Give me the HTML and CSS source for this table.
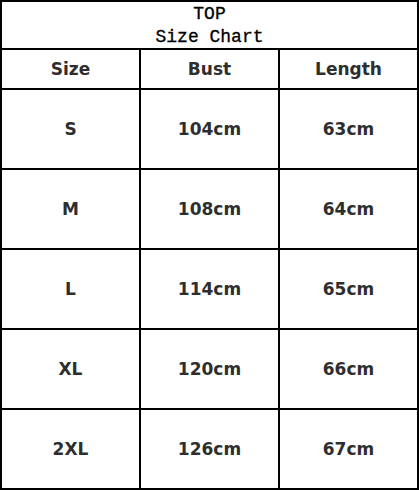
FILE: index.html
```html
<!DOCTYPE html>
<html>
<head>
<meta charset="utf-8">
<link rel="stylesheet" href="styles.css">
</head>
<body>
<div class="chart">
  <div class="cell title">TOP<br>Size Chart</div>
  <div class="cell head">Size</div>
  <div class="cell head">Bust</div>
  <div class="cell head">Length</div>
  <div class="cell">S</div><div class="cell">104cm</div><div class="cell">63cm</div>
  <div class="cell">M</div><div class="cell">108cm</div><div class="cell">64cm</div>
  <div class="cell">L</div><div class="cell">114cm</div><div class="cell">65cm</div>
  <div class="cell">XL</div><div class="cell">120cm</div><div class="cell">66cm</div>
  <div class="cell">2XL</div><div class="cell">126cm</div><div class="cell">67cm</div>
</div>
</body>
</html>
```
FILE: styles.css
```css
html, body {
  margin: 0;
  padding: 0;
  background: #fff;
}
.chart {
  width: 419px;
  height: 490px;
  box-sizing: border-box;
  display: grid;
  grid-template-columns: 137px 137px 137px;
  grid-template-rows: 46px 38px repeat(5, 78px);
  gap: 2px;
  padding: 2px;
  background: #000;
}
.cell {
  background: #fff;
  display: flex;
  align-items: center;
  justify-content: center;
  font-family: "DejaVu Sans", Verdana, sans-serif;
  font-weight: bold;
  font-size: 17px;
  color: #2e2e2e;
}
.title {
  grid-column: 1 / 4;
  flex-direction: column;
  padding-top: 2px;
  font-family: "Liberation Mono", "Courier New", monospace;
  font-weight: normal;
  font-size: 18px;
  line-height: 23px;
  color: #000;
  text-align: center;
  -webkit-text-stroke: 0.3px #000;
}
```
